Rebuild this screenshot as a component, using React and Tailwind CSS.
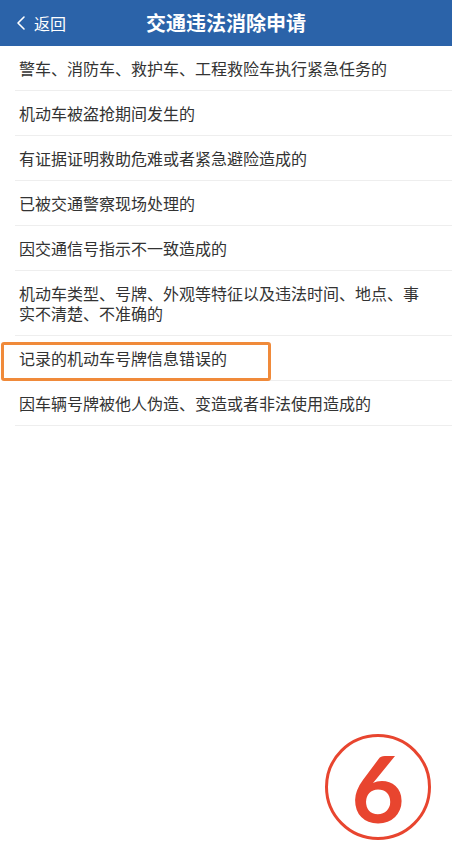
import { ChevronLeft } from "lucide-react"

const items = [
    "警车、消防车、救护车、工程救险车执行紧急任务的",
    "机动车被盗抢期间发生的",
    "有证据证明救助危难或者紧急避险造成的",
    "已被交通警察现场处理的",
    "因交通信号指示不一致造成的",
    "机动车类型、号牌、外观等特征以及违法时间、地点、事实不清楚、不准确的",
    "记录的机动车号牌信息错误的",
    "因车辆号牌被他人伪造、变造或者非法使用造成的",
]

const font = { fontFamily: '"Noto Sans CJK SC", "Noto Sans", sans-serif' }

export default function App() {
    return (
        <div className="w-[452px] h-[854px] bg-white relative overflow-hidden" style={font}>
            {/* header */}
            <div className="h-[46px] bg-[#2b63a9] flex items-center relative">
                <div className="flex items-center pl-[9px] text-white">
                    <ChevronLeft size={24} strokeWidth={1.6} />
                    <span className="text-[16px] ml-[1px]">返回</span>
                </div>
                <h1 className="absolute inset-0 flex items-center justify-center text-white text-[20px] font-bold">
                    交通违法消除申请
                </h1>
            </div>

            <ul>
                {items.map((text, i) => (
                    <li key={i} className="relative pl-[15px]">
                        <div className={`border-b border-[#eeeeee] pl-[4px] pr-[30px] text-[16px] leading-[20px] text-[#333333] ${i === 5 ? "py-[12px]" : "py-[12px] min-h-[45px]"}`}>
                            {text}
                        </div>
                        {i === 6 && (
                            <div className="absolute left-[1px] top-[6px] w-[270px] h-[39px] border-[3px] border-[#f08a3a] rounded-[3px]" />
                        )}
                    </li>
                ))}
            </ul>

            {/* step marker */}
            <div className="absolute left-[325px] top-[734px] w-[106px] h-[106px] rounded-full border-[3px] border-[#e8452f] flex items-center justify-center">
                <span className="text-[#e8452f] text-[92px] font-bold leading-none pt-[2px]" style={{ fontFamily: 'Lato, "Open Sans", sans-serif' }}>6</span>
            </div>
        </div>
    )
}
